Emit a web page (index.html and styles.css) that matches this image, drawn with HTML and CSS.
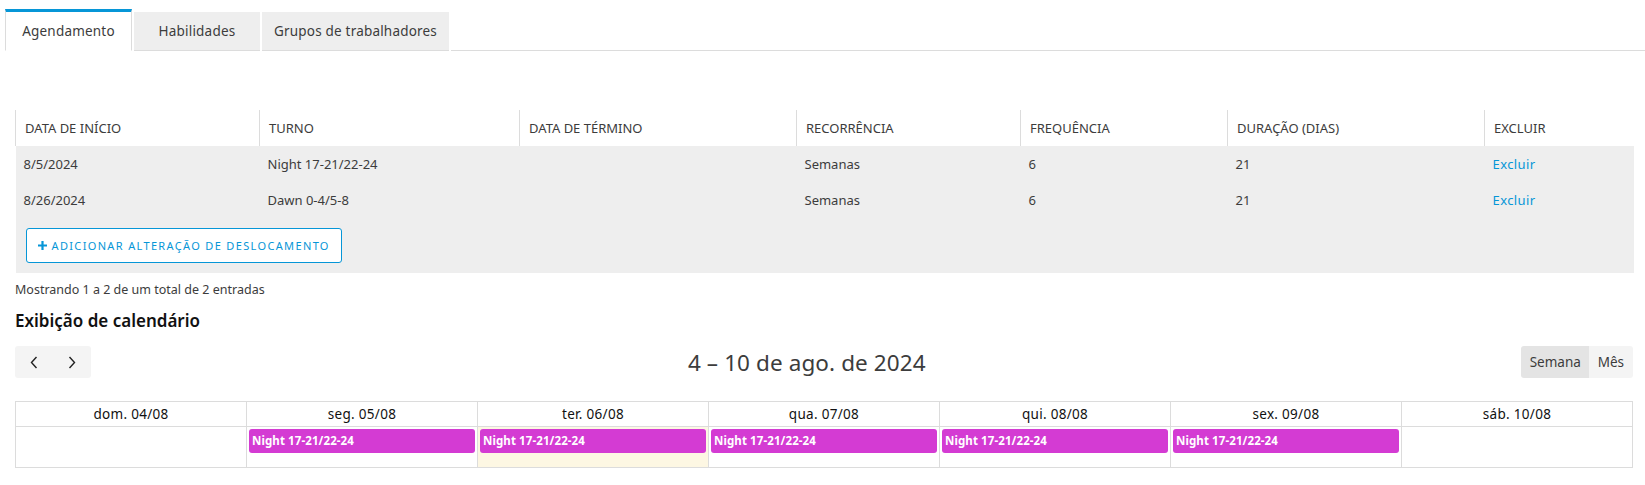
FILE: index.html
```html
<!DOCTYPE html>
<html lang="pt-BR">
<head>
<meta charset="utf-8">
<title>Agendamento</title>
<link rel="stylesheet" href="styles.css">
</head>
<body>
<div class="tabs">
  <div class="tab active">Agendamento</div>
  <div class="tab">Habilidades</div>
  <div class="tab wide">Grupos de trabalhadores</div>
  <div class="tab-fill"></div>
</div>

<main class="content">
  <table class="shifts">
    <colgroup>
      <col class="c1"><col class="c2"><col class="c3"><col class="c4"><col class="c5"><col class="c6"><col class="c7">
    </colgroup>
    <thead>
      <tr>
        <th>DATA DE INÍCIO</th>
        <th>TURNO</th>
        <th>DATA DE TÉRMINO</th>
        <th>RECORRÊNCIA</th>
        <th>FREQUÊNCIA</th>
        <th>DURAÇÃO (DIAS)</th>
        <th>EXCLUIR</th>
      </tr>
    </thead>
    <tbody>
      <tr>
        <td>8/5/2024</td>
        <td>Night 17-21/22-24</td>
        <td></td>
        <td>Semanas</td>
        <td>6</td>
        <td>21</td>
        <td><a class="link" href="#">Excluir</a></td>
      </tr>
      <tr>
        <td>8/26/2024</td>
        <td>Dawn 0-4/5-8</td>
        <td></td>
        <td>Semanas</td>
        <td>6</td>
        <td>21</td>
        <td><a class="link" href="#">Excluir</a></td>
      </tr>
      <tr class="foot">
        <td colspan="7">
          <button class="add-btn" type="button">
            <svg class="plus" width="9" height="9" viewBox="0 0 9 9"><path d="M4.5 0v9M0 4.5h9" stroke="#0696d7" stroke-width="2.2"/></svg>
            <span>ADICIONAR ALTERAÇÃO DE DESLOCAMENTO</span>
          </button>
        </td>
      </tr>
    </tbody>
  </table>

  <p class="info">Mostrando 1 a 2 de um total de 2 entradas</p>

  <h2 class="cal-title">Exibição de calendário</h2>

  <div class="toolbar">
    <div class="nav">
      <button class="nav-btn" type="button" aria-label="Anterior">
        <svg width="8" height="13" viewBox="0 0 8 13"><path d="M6.5 1 L1.5 6.5 L6.5 12" fill="none" stroke="#222" stroke-width="1.4"/></svg>
      </button>
      <button class="nav-btn" type="button" aria-label="Próximo">
        <svg width="8" height="13" viewBox="0 0 8 13"><path d="M1.5 1 L6.5 6.5 L1.5 12" fill="none" stroke="#222" stroke-width="1.4"/></svg>
      </button>
    </div>
    <div class="range">4 – 10 de ago. de 2024</div>
    <div class="views">
      <button class="view active" type="button">Semana</button>
      <button class="view" type="button">Mês</button>
    </div>
  </div>

  <div class="calendar">
    <div class="day-head">dom. 04/08</div>
    <div class="day-head">seg. 05/08</div>
    <div class="day-head">ter. 06/08</div>
    <div class="day-head">qua. 07/08</div>
    <div class="day-head">qui. 08/08</div>
    <div class="day-head">sex. 09/08</div>
    <div class="day-head">sáb. 10/08</div>

    <div class="day-cell"></div>
    <div class="day-cell"><div class="event">Night 17-21/22-24</div></div>
    <div class="day-cell today"><div class="event">Night 17-21/22-24</div></div>
    <div class="day-cell"><div class="event">Night 17-21/22-24</div></div>
    <div class="day-cell"><div class="event">Night 17-21/22-24</div></div>
    <div class="day-cell"><div class="event">Night 17-21/22-24</div></div>
    <div class="day-cell"></div>
  </div>
</main>
</body>
</html>
```

FILE: styles.css
```css
* { box-sizing: border-box; }

body {
  margin: 0;
  font-family: "Noto Sans", "Open Sans", sans-serif;
  color: #3c3c3c;
  background: #fff;
}

/* Tabs */
.tabs {
  display: flex;
  align-items: flex-end;
  padding: 9px 0 0 5px;
  height: 51px;
}
.tab {
  height: 39px;
  min-width: 126px;
  padding: 0 11px;
  margin-right: 2px;
  display: flex;
  align-items: center;
  justify-content: center;
  background: #eeeeee;
  border-bottom: 1px solid #dcdcdc;
  font-size: 13.5px;
  letter-spacing: 0.2px;
  color: #3c3c3c;
}
.tab.active {
  height: 42px;
  width: 127px;
  background: #fff;
  border-top: 3px solid #0696d7;
  border-left: 1px solid #dcdcdc;
  border-right: 1px solid #dcdcdc;
  border-bottom: 1px solid #fff;
  padding-top: 0;
}
.tab.wide { width: 187px; }
.tab-fill {
  flex: 1;
  border-bottom: 1px solid #dcdcdc;
}

.content {
  padding: 59px 12px 0 15px;
}

/* Table */
.shifts {
  width: 1618px;
  border-collapse: collapse;
  table-layout: fixed;
  font-size: 13px;
}
.c1 { width: 244px; }
.c2 { width: 260px; }
.c3 { width: 277px; }
.c4 { width: 224px; }
.c5 { width: 207px; }
.c6 { width: 257px; }
.c7 { width: 149px; }

.shifts th {
  height: 36px;
  padding: 0 9px;
  text-align: left;
  font-weight: normal;
  border-left: 1px solid #dcdcdc;
  color: #3c3c3c;
  vertical-align: middle;
}
.shifts td {
  height: 36px;
  padding: 0 8px 1px 8px;
  background: #eeeeee;
  vertical-align: middle;
  color: #3c3c3c;
}
.shifts tr.foot td {
  height: 55px;
  padding: 0 10px;
}
.link {
  color: #0696d7;
  text-decoration: none;
  letter-spacing: 0.4px;
}

.add-btn {
  display: inline-flex;
  align-items: center;
  gap: 5px;
  height: 35px;
  padding: 0 11px 0 11px;
  border: 1px solid #0696d7;
  border-radius: 3px;
  background: #fff;
  color: #0696d7;
  font-family: "Noto Sans", "Open Sans", sans-serif;
  font-size: 11px;
  letter-spacing: 1.35px;
  white-space: nowrap;
  cursor: pointer;
}
.plus { flex: none; }

.info {
  margin: 8px 0 0 0;
  font-size: 12.5px;
  line-height: 18px;
  color: #3c3c3c;
}

.cal-title {
  margin: 10px 0 0 0;
  font-size: 17px;
  font-weight: 600;
  line-height: 24px;
  color: #111;
}

/* Toolbar */
.toolbar {
  display: flex;
  align-items: center;
  justify-content: space-between;
  margin-top: 13px;
  height: 32px;
}
.nav {
  display: flex;
  width: 76px;
  height: 32px;
  background: #f4f4f4;
  border-radius: 3px;
}
.nav-btn {
  flex: 1;
  border: 0;
  background: transparent;
  display: flex;
  align-items: center;
  justify-content: center;
  padding: 0;
  cursor: pointer;
}
.range {
  font-size: 22.5px;
  color: #3c3c3c;
  letter-spacing: 0.1px;
  margin-left: 2px;
}
.views {
  display: flex;
  height: 32px;
  border-radius: 3px;
  overflow: hidden;
}
.view {
  border: 0;
  font-family: "Noto Sans", "Open Sans", sans-serif;
  font-size: 13.5px;
  color: #3c3c3c;
  background: #f4f4f4;
  padding: 0 9px;
  cursor: pointer;
}
.view.active {
  background: #e4e4e4;
  width: 68px;
}

/* Calendar */
.calendar {
  margin-top: 23px;
  width: 1618px;
  display: grid;
  grid-template-columns: repeat(7, 1fr);
  border-top: 1px solid #dcdcdc;
  border-left: 1px solid #dcdcdc;
}
.day-head {
  height: 25px;
  border-right: 1px solid #dcdcdc;
  border-bottom: 1px solid #dcdcdc;
  display: flex;
  align-items: center;
  justify-content: center;
  font-size: 13.5px;
  color: #111;
  letter-spacing: 0.3px;
}
.day-cell {
  height: 41px;
  border-right: 1px solid #dcdcdc;
  border-bottom: 1px solid #dcdcdc;
  padding: 2px 2px 0 2px;
}
.day-cell.today { background: #fdf7e3; }
.event {
  height: 24px;
  background: #d43bd3;
  border-radius: 3px;
  color: #fff;
  font-size: 11.5px;
  font-weight: bold;
  line-height: 24px;
  padding-left: 3px;
  letter-spacing: 0.1px;
  white-space: nowrap;
  overflow: hidden;
}
```
